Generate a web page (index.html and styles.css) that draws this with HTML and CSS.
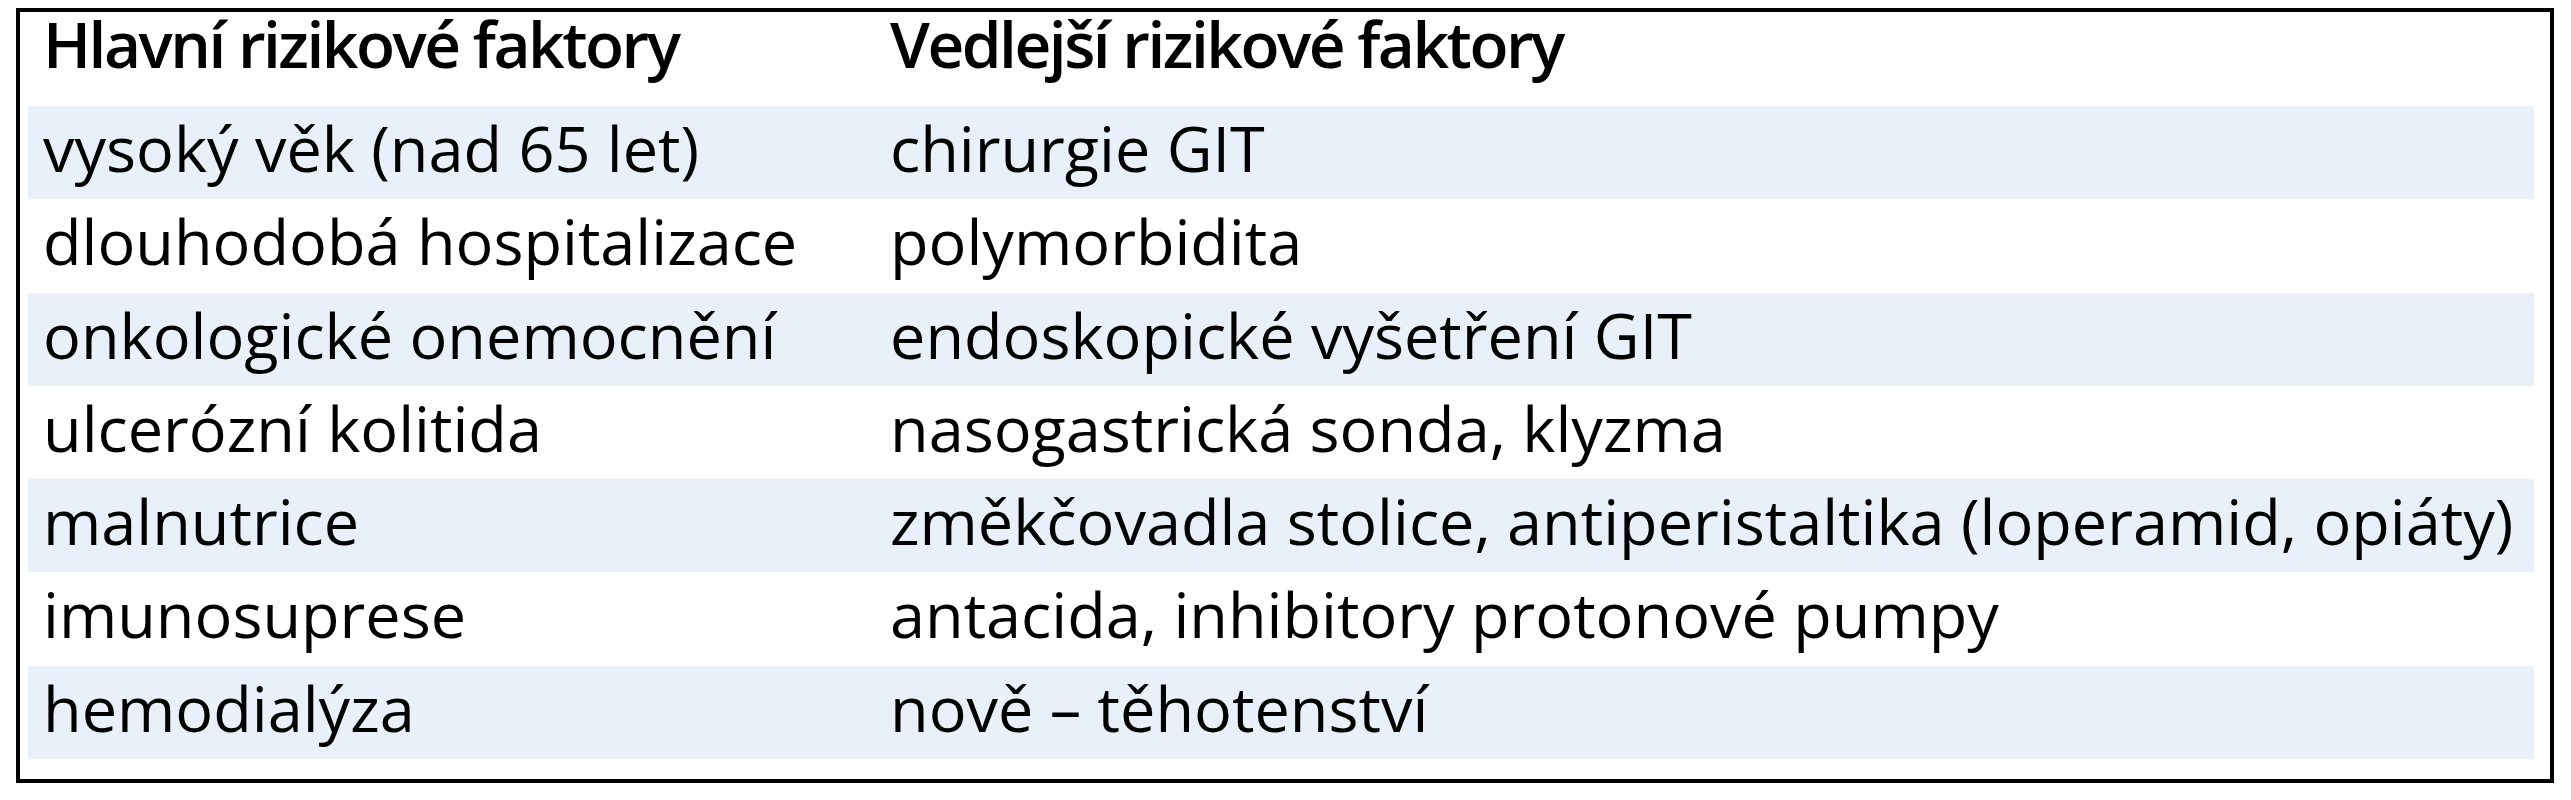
FILE: index.html
```html
<!DOCTYPE html>
<html lang="cs">
<head>
<meta charset="utf-8">
<title>Rizikové faktory</title>
<link rel="stylesheet" href="styles.css">
</head>
<body>
<div class="frame">
  <table class="risk">
    <thead>
      <tr><th class="c1">Hlavní rizikové faktory</th><th>Vedlejší rizikové faktory</th></tr>
    </thead>
    <tbody>
      <tr><td>vysoký věk (nad 65 let)</td><td>chirurgie GIT</td></tr>
      <tr><td>dlouhodobá hospitalizace</td><td>polymorbidita</td></tr>
      <tr><td>onkologické onemocnění</td><td>endoskopické vyšetření GIT</td></tr>
      <tr><td>ulcerózní kolitida</td><td>nasogastrická sonda, klyzma</td></tr>
      <tr><td>malnutrice</td><td>změkčovadla stolice, antiperistaltika (loperamid, opiáty)</td></tr>
      <tr><td>imunosuprese</td><td>antacida, inhibitory protonové pumpy</td></tr>
      <tr><td>hemodialýza</td><td>nově – těhotenství</td></tr>
    </tbody>
  </table>
</div>
</body>
</html>
```
FILE: styles.css
```css
html, body {
  margin: 0;
  padding: 0;
  background: #ffffff;
}
body {
  font-family: "Open Sans", "Noto Sans", sans-serif;
  color: #000;
}
.frame {
  box-sizing: border-box;
  width: 2538px;
  margin: 8px 0 0 16px;
  border: 4px solid #000;
  padding: 0 16px 20px 8px;
}
.risk {
  width: 100%;
  border-collapse: collapse;
  border-spacing: 0;
  table-layout: fixed;
}
.risk th,
.risk td {
  text-align: left;
  vertical-align: top;
  padding: 0 15px;
  white-space: nowrap;
}
.risk th {
  height: 94px;
  font-size: 64px;
  line-height: 63px;
  font-weight: 600;
  letter-spacing: -2.5px;
}
.risk th.c1 {
  width: 817px;
}
.risk td {
  height: 93.3px;
  box-sizing: border-box;
  font-size: 63px;
  line-height: 83px;
  font-weight: 400;
}
.risk tbody tr:nth-child(odd) {
  background: #e9f0f9;
}
```
